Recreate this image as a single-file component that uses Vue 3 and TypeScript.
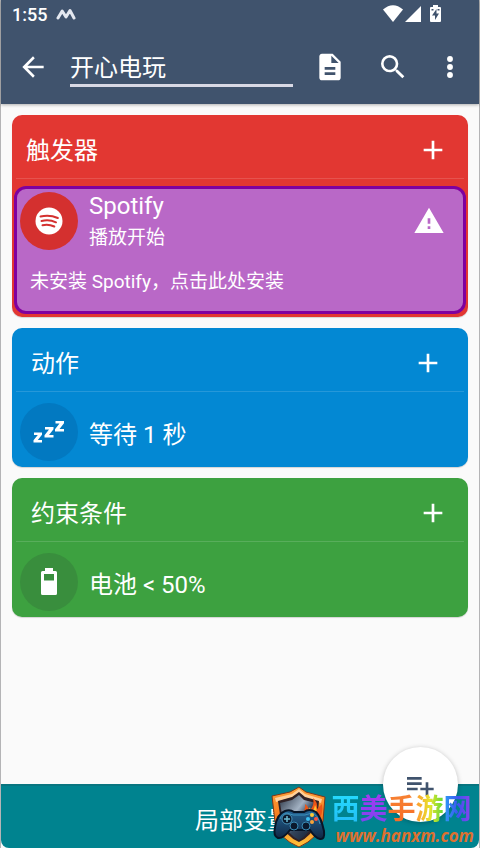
<script setup lang="ts">
import { ref } from 'vue'

const macroName = ref('开心电玩')
const brand = [
  { char: '西', tone: 'cyan' },
  { char: '美', tone: 'violet' },
  { char: '手', tone: 'orange' },
  { char: '游', tone: 'lime' },
  { char: '网', tone: 'indigo' },
]
</script>

<template>
  <div class="screen">
    <header class="top">
      <div class="status">
        <span class="clock">1:55</span>
        <svg class="app-mark" width="20" height="12" viewBox="0 0 20 12"><path d="M2 10 6.200 3l3.800 6 4-6.500L18 10" /></svg>
        <svg class="signals" width="62" height="20" viewBox="0 0 62 20">
          <path d="M0 5.500Q10-3 20 5.500L10 18Z" />
          <path d="M38 2v16H22Z" />
          <path fill-rule="evenodd" d="M50 1h5v2h2q1 0 1 1v13q0 1-1 1h-9q-1 0-1-1V4q0-1 1-1h2ZM53.500 5 49 11.500h3V16l4-6.500h-2.500ZM48.500 5v1.500h2V5Zm6 0v1.500h2V5Z" />
        </svg>
      </div>
      <div class="toolbar">
        <button class="icon-btn" aria-label="返回">
          <svg width="32" height="32" viewBox="0 0 24 24"><path d="M20 11.100H7.830l5.500-5.600L12 4l-8 8 8 8 1.330-1.500-5.500-5.600H20z" /></svg>
        </button>
        <input v-model="macroName" class="name" type="text" aria-label="宏名称" spellcheck="false" />
        <nav class="tools">
          <button class="icon-btn" aria-label="日志">
            <svg width="32" height="32" viewBox="0 0 24 24"><path d="M14 2H6c-1.100 0-2 .9-2 2v16c0 1.100.9 2 2 2h12c1.100 0 2-.9 2-2V8l-6-6zm2 16H8v-2h8v2zm0-4H8v-2h8v2zm-3-5V3.500L18.500 9H13z" /></svg>
          </button>
          <button class="icon-btn" aria-label="搜索">
            <svg width="32" height="32" viewBox="0 0 24 24"><path d="M15.500 14h-.79l-.28-.27A6.470 6.470 0 0 0 16 9.500 6.500 6.500 0 1 0 9.500 16c1.610 0 3.090-.59 4.230-1.570l.27.28v.79l5 4.990L20.490 19l-4.990-5zm-6 0C7.010 14 5 11.990 5 9.500S7.010 5 9.500 5 14 7.010 14 9.500 11.990 14 9.500 14z" /></svg>
          </button>
          <button class="icon-btn more" aria-label="更多">
            <svg width="20" height="32" viewBox="4 0 15 24"><circle cx="11.500" cy="6" r="2.200" /><circle cx="11.500" cy="12" r="2.200" /><circle cx="11.500" cy="18" r="2.200" /></svg>
          </button>
        </nav>
      </div>
    </header>

    <main class="cards">
      <section class="card red">
        <div class="head">
          <h2>触发器</h2>
          <button class="icon-btn" aria-label="添加触发器">
            <svg width="32" height="32" viewBox="0 0 24 24"><path d="M19 13h-6v6h-2v-6H5v-2h6V5h2v6h6z" /></svg>
          </button>
        </div>
        <article class="selected">
          <div class="entry">
            <span class="disc">
              <svg width="28" height="28" viewBox="0 0 28 28">
                <circle cx="14" cy="14" r="13.500" />
                <g class="waves"><path d="M5.500 9.500q9-2.300 17.300 1.500" /><path d="M6.500 14q7.800-1.800 14.500 1.300" /><path d="M7.500 18.300q6-1.400 11.800 1.200" /></g>
              </svg>
            </span>
            <div class="labels">
              <h3>Spotify</h3>
              <p>播放开始</p>
            </div>
            <svg class="warn" width="32" height="32" viewBox="0 0 24 24"><path d="M1 21h22L12 2 1 21zm12-3h-2v-2h2v2zm0-4h-2v-4h2v4z" /></svg>
          </div>
          <button class="install">未安装 Spotify，点击此处安装</button>
        </article>
      </section>

      <section class="card blue">
        <div class="head">
          <h2>动作</h2>
          <button class="icon-btn" aria-label="添加动作">
            <svg width="32" height="32" viewBox="0 0 24 24"><path d="M19 13h-6v6h-2v-6H5v-2h6V5h2v6h6z" /></svg>
          </button>
        </div>
        <div class="entry">
          <span class="disc">
            <svg width="32" height="24" viewBox="0 0 32 24">
              <path d="M1 12.500h8v2.300L4.800 20H9v2.500H.5v-2.300L4.800 15H1ZM12 7h8.500v2.300L16 15h4.500v2.500h-9v-2.300L16 9.500h-4ZM22.500 1h8.500v2.300L26.500 9H31v2.500h-9V9.200l4.500-5.700h-4Z" />
            </svg>
          </span>
          <h3>等待 1 秒</h3>
        </div>
      </section>

      <section class="card green">
        <div class="head">
          <h2>约束条件</h2>
          <button class="icon-btn" aria-label="添加约束条件">
            <svg width="32" height="32" viewBox="0 0 24 24"><path d="M19 13h-6v6h-2v-6H5v-2h6V5h2v6h6z" /></svg>
          </button>
        </div>
        <div class="entry">
          <span class="disc">
            <svg width="18" height="28" viewBox="0 0 18 28"><path fill-rule="evenodd" d="M5 0h8v3h2.500q1.500 0 1.500 1.500v21q0 1.500-1.500 1.500h-13Q1 27 1 25.500v-21Q1 3 2.500 3H5ZM4 6v6.500h10V6Z" /></svg>
          </span>
          <h3>电池 &lt; 50%</h3>
        </div>
      </section>
    </main>

    <footer class="locals">
      <button class="locals-btn">局部变量</button>
    </footer>

    <button class="fab" aria-label="添加变量">
      <svg width="32" height="32" viewBox="0 0 24 24"><path d="M14 10H3v2h11v-2zm0-4H3v2h11V6zm5 8v-4h-2v4h-4v2h4v4h2v-4h4v-2h-4zM3 16h8v-2H3v2z" /></svg>
    </button>

    <div class="brand">
      <svg class="shield" width="56" height="62" viewBox="0 0 56 62">
        <defs>
          <linearGradient id="rim" x1="0" y1="0" x2="0" y2="1"><stop offset="0" stop-color="#ffa43a" /><stop offset=".5" stop-color="#f47b20" /><stop offset="1" stop-color="#ffc43a" /></linearGradient>
          <linearGradient id="steel" x1="0" y1="0" x2="1" y2="1"><stop offset="0" stop-color="#283344" /><stop offset=".4" stop-color="#a3b2c3" /><stop offset=".58" stop-color="#34465d" /><stop offset="1" stop-color="#101a2d" /></linearGradient>
          <linearGradient id="pad" x1="0" y1="0" x2="0" y2="1"><stop offset="0" stop-color="#246596" /><stop offset="1" stop-color="#102642" /></linearGradient>
        </defs>
        <path fill="url(#rim)" stroke="#7d3519" d="M28 1 35 6l19 5-2 24q-4 17-24 26Q8 53 4 36L1 10l18-4Z" />
        <path fill="#ffd09a" d="m28 3 6 5 17 5-1 4-17-6-5-4-6 4L5 16l-1-4 17-4Z" />
        <path fill="#302226" d="m28 6 6 5 14 4-2 21q-5 14-18 20-14-6-18-20L7 15l14-4Z" />
        <path fill="url(#steel)" d="m28 9 5 5 12 3-2 18q-4 13-15 19-12-6-16-19l-3-18 12-3Z" />
        <path fill="#ed5516" d="M30 29q5-5 4-11 4 3 4 7 6-5 4-13 5 4 4 11l5-5q2 10-5 18Z" />
        <path fill="#ffc330" d="M34 29q4-4 5-8 1 4 0 6 4-2 5-8 4 6-1 14Z" />
        <path fill="url(#pad)" stroke="#071426" stroke-width="2" d="M14 25q5-2 9 1h10q5-4 12 0 5 5 8 19 1 9-4 8-5-1-10-9H19q-7 9-12 8-5-2-3-11 2-13 10-16Z" />
        <path fill="none" stroke="#3b91bd" d="M9 33q2-6 7-6l6 2h12l7-2q6 2 8 11" />
        <circle cx="16" cy="33" r="5" fill="#0b192d" stroke="#4792b8" /><path d="M16 30v6M13 33h6" stroke="#6bbbd2" stroke-width="1.500" />
        <circle cx="23" cy="40" r="4" fill="#0b192d" stroke="#398ab4" /><circle cx="35" cy="40" r="4" fill="#0b192d" stroke="#398ab4" />
        <circle cx="41" cy="29" r="2" fill="#ffc935" /><circle cx="45" cy="33" r="2" fill="#ff543d" /><circle cx="37" cy="33" r="2" fill="#3bc0f2" /><circle cx="41" cy="36" r="2" fill="#f6a33a" />
      </svg>
      <div class="brand-text">
        <div class="brand-name"><span v-for="b in brand" :key="b.char" :class="b.tone">{{ b.char }}</span></div>
        <div class="brand-url">www.hanxm.com</div>
      </div>
    </div>
  </div>
</template>

<style>
body {
  background: #fafafa;
}
</style>

<style scoped>
.screen {
  position: relative;
  box-sizing: border-box;
  min-height: 100vh;
  display: flex;
  flex-direction: column;
  background: #fafafa;
  border: solid #b4b4b6;
  border-width: 0 1px;
  color: #fff;
  font-family: Roboto, "Noto Sans CJK SC", sans-serif;
}
h2, h3, p {
  margin: 0;
  font-weight: 400;
}
h2, h3 {
  font-size: 24px;
  line-height: 32px;
}
button, input {
  font-family: inherit;
  color: inherit;
  background: none;
  border: 0;
  padding: 0;
}
svg {
  display: block;
  fill: currentColor;
}
.top {
  background: #40536d;
  box-shadow: 0 1px 3px rgba(0, 0, 0, 0.3);
}
.status {
  display: flex;
  align-items: center;
  height: 28px;
  padding: 0 34px 0 11px;
}
.clock {
  font-size: 18px;
  font-weight: 500;
}
.app-mark {
  margin-left: 9px;
  fill: none;
  stroke: #e4e8f0;
  stroke-width: 3;
  stroke-linejoin: round;
  stroke-linecap: round;
}
.signals {
  margin-left: auto;
}
.toolbar {
  display: flex;
  align-items: center;
  height: 74px;
  padding: 2px 19px 0 16px;
}
.icon-btn {
  display: grid;
  place-items: center;
  width: 32px;
  height: 40px;
}
.more {
  width: 20px;
}
.name {
  flex: 1;
  min-width: 0;
  box-sizing: border-box;
  height: 40px;
  margin: 0 21px;
  border-bottom: 3px solid #d9d9e5;
  font-size: 24px;
  outline: 0;
}
.tools {
  display: flex;
  gap: 31px;
}
.cards {
  flex: 1;
  display: flex;
  flex-direction: column;
  gap: 11px;
  padding: 11px 11px 20px;
}
.card {
  border-radius: 10px;
  box-shadow: 0 1px 1px rgba(0, 0, 0, 0.15);
}
.red { background: #e23732; }
.blue { background: #0388d3; }
.green { background: #3da140; }
.head {
  display: flex;
  align-items: center;
  justify-content: space-between;
  box-sizing: border-box;
  height: 64px;
  margin: 0 4px;
  padding: 7px 15px 0;
  border-bottom: 1px solid rgba(255, 255, 255, 0.14);
}
.head h2 {
  padding-top: 2px;
}
.red .head { padding-left: 10px; }
.blue .head { padding-right: 20px; }
.entry {
  display: flex;
  align-items: center;
  gap: 11px;
}
.card > .entry {
  padding: 11px 8px 6px;
}
.card > .entry h3 {
  padding-top: 6px;
}
.disc {
  flex: none;
  display: grid;
  place-items: center;
  width: 58px;
  height: 58px;
  border-radius: 50%;
}
.red .disc { background: #d4302f; }
.blue .disc { background: #0279c1; }
.green .disc { background: #398e3d; }
.waves {
  fill: none;
  stroke: #d4302f;
  stroke-width: 2;
  stroke-linecap: round;
}
.red {
  padding-bottom: 3px;
}
.selected {
  box-sizing: border-box;
  height: 128px;
  margin: 7px 2px 0;
  padding: 0 3px;
  background: #b968c7;
  border: 3px solid #7f009f;
  border-radius: 12px;
}
.labels {
  flex: 1;
  padding-top: 2px;
}
.labels h3, .labels p {
  line-height: 31px;
}
.labels p, .install {
  font-size: 19px;
}
.warn {
  margin-right: 15px;
}
.install {
  display: block;
  margin: 14px 0 0 10px;
  line-height: 30px;
  text-align: left;
}
.locals {
  background: #00838f;
  border-top: 2px solid #087580;
  border-radius: 0 0 8px 8px;
}
.locals-btn {
  display: block;
  width: 100%;
  height: 62px;
  padding: 2px 0 0 6px;
  font-size: 24px;
}
.fab {
  position: absolute;
  right: 21px;
  bottom: 26px;
  display: grid;
  place-items: center;
  width: 75px;
  height: 75px;
  padding-right: 4px;
  border-radius: 50%;
  background: #fff;
  color: #40536d;
  box-shadow: 0 1px 5px rgba(0, 0, 0, 0.25);
}
.brand {
  position: absolute;
  right: 5px;
  bottom: 0;
  display: flex;
  align-items: flex-end;
  gap: 6px;
  pointer-events: none;
}
.shield {
  margin-right: -1px;
}
.brand-name {
  display: flex;
  font-size: 28px;
  line-height: 34px;
  font-weight: 700;
}
.brand-name span {
  color: transparent;
  background-clip: text;
}
.brand-name .cyan { background-image: linear-gradient(#25dcff, #22b9f5); }
.brand-name .violet { background-image: linear-gradient(#a73af2, #7546ef); }
.brand-name .orange { background-image: linear-gradient(#f78333, #f76825); }
.brand-name .lime { background-image: linear-gradient(90deg, #ff9830, #e6e52c, #56d836); }
.brand-name .indigo { background-image: linear-gradient(90deg, #2b9df5, #3d54ef, #9340ee); }
.brand-url {
  padding-left: 4px;
  font-family: "Open Sans", sans-serif;
  font-size: 17px;
  line-height: 18px;
  padding-bottom: 3px;
  font-weight: 700;
  font-style: italic;
  color: #dd7130;
}
</style>
